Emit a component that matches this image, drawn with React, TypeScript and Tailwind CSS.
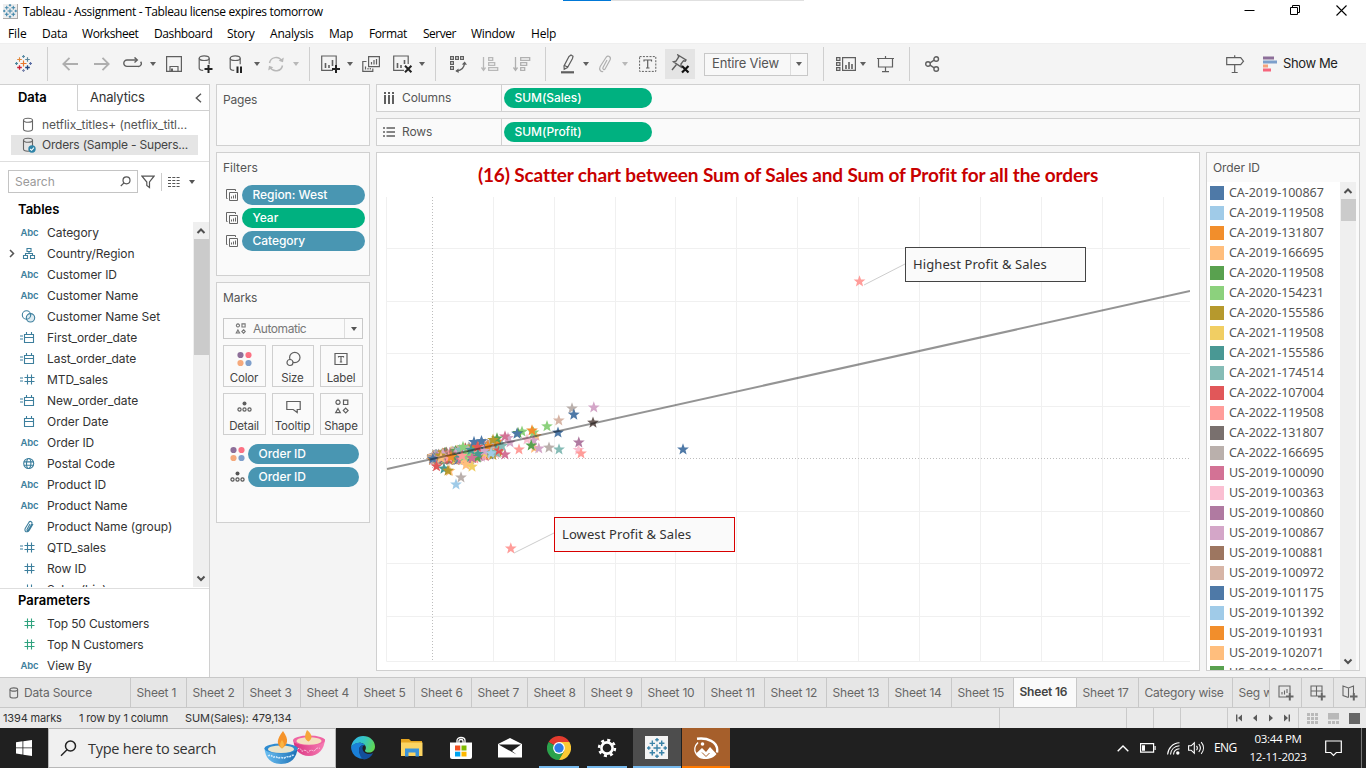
import React from "react";

const UI = "font-['Inter','Liberation_Sans',sans-serif]";
const WIN = "font-['Open_Sans','Noto_Sans',sans-serif]";

type IconProps = { w: number; h: number; c?: string; children: React.ReactNode; sw?: number };

function Icon({ w, h, c = "", sw = 1.2, children }: IconProps) {
  return (
    <svg
      width={w}
      height={h}
      viewBox={`0 0 ${w} ${h}`}
      fill="none"
      stroke="currentColor"
      strokeWidth={sw}
      className={`shrink-0 ${c}`}
    >
      {children}
    </svg>
  );
}

function Caret({ c = "" }: { c?: string }) {
  return (
    <Icon w={6} h={4} c={c}>
      <path d="M0 0h6L3 4z" fill="currentColor" stroke="none" />
    </Icon>
  );
}

function plus(x: number, y: number, r: number) {
  return `M${x - r} ${y}h${2 * r}M${x} ${y - r}v${2 * r}`;
}

function TableauLogo({ mono = false, size = 17, c = "" }: { mono?: boolean; size?: number; c?: string }) {
  const k = (s: string) => (mono ? "#3b83a8" : s);
  return (
    <svg width={size} height={size} viewBox="0 0 17 17" fill="none" className={`shrink-0 ${c}`}>
      <path d={plus(8.5, 8.5, 3)} stroke={k("#e8762c")} strokeWidth="1.200" />
      <path d={plus(4.5, 4.5, 2.3)} stroke={k("#e0873a")} strokeWidth="1.100" />
      <path d={plus(12.5, 4.5, 2.3)} stroke={k("#5b879b")} strokeWidth="1.200" />
      <path d={plus(4.5, 12.5, 2.3)} stroke={k("#c72035")} strokeWidth="1.300" />
      <path d={plus(12.5, 12.5, 2.3)} stroke={k("#1f447e")} strokeWidth="1.300" />
      <path d={plus(8.5, 1.5, 1.5)} stroke={k("#5d8da6")} strokeWidth="1.200" />
      <path d={plus(8.5, 15.5, 1.5)} stroke={k("#7f8ab0")} strokeWidth="1.200" />
      <path d={plus(1.5, 8.5, 1.5)} stroke={k("#4a869b")} strokeWidth="1.200" />
      <path d={plus(15.5, 8.5, 1.5)} stroke={k("#5c6fa6")} strokeWidth="1.200" />
    </svg>
  );
}

function TitleBar() {
  return (
    <div className={`flex h-[23px] items-center bg-white text-[12px] text-black ${WIN}`}>
      <div className="ml-[3px] flex h-[15px] w-[15px] items-center justify-center border-r border-b border-[#aaa] bg-[#eee]">
        <TableauLogo mono size={14} />
      </div>
      <span className="ml-[5px] w-[300px] tracking-[-0.35px] whitespace-nowrap">
        Tableau - Assignment - Tableau license expires tomorrow
      </span>
      <div className="ml-[240px] flex h-px w-[241px] self-start bg-[#e0e0e0]">
        <div className="h-px w-12 bg-[#0078d7]" />
      </div>
      <div className="mr-[19px] mb-[2px] ml-auto flex gap-x-[35px]">
        <Icon w={11} h={11} sw={1}>
          <path d="M.5 5.500h10" />
        </Icon>
        <Icon w={11} h={11} sw={1}>
          <path d="M.5 2.500h7v7h-7zM2.500 2.500v-2h7v7h-2" />
        </Icon>
        <Icon w={11} h={11} sw={1.1}>
          <path d="M.5.500l10 10M10.500.500l-10 10" />
        </Icon>
      </div>
    </div>
  );
}

function MenuBar() {
  return (
    <div className={`flex h-5 items-center bg-white pt-px pl-2 text-[12px] text-black ${WIN}`}>
      <span className="w-[34px] tracking-[-0.1px]">File</span>
      <span className="w-[40px] tracking-[-0.2px]">Data</span>
      <span className="w-[72px] tracking-[-0.45px]">Worksheet</span>
      <span className="w-[73px] tracking-[-0.4px]">Dashboard</span>
      <span className="w-[43px] tracking-[-0.3px]">Story</span>
      <span className="w-[59px] tracking-[-0.2px]">Analysis</span>
      <span className="w-[40px] tracking-[-0.2px]">Map</span>
      <span className="w-[54px] tracking-[-0.4px]">Format</span>
      <span className="w-[48px] tracking-[-0.5px]">Server</span>
      <span className="w-[60px] tracking-[-0.3px]">Window</span>
      <span className="tracking-[-0.2px]">Help</span>
    </div>
  );
}

function Sep({ c }: { c: string }) {
  return <div className={`h-[34px] w-px shrink-0 bg-[#cfcfcf] ${c}`} />;
}

function Toolbar() {
  return (
    <div className={`flex h-[41px] items-center border-t border-[#efefef] bg-[#f4f4f4] text-[#5f5f5f] ${UI}`}>
      <TableauLogo c="mr-px mb-px ml-[15px]" />
      <Sep c="ml-[14px]" />
      <Icon w={16} h={14} c="ml-[14px] text-[#aeaeae]" sw={1.8}>
        <path d="M1 7h15M7.500.8L1.300 7l6.200 6.200" />
      </Icon>
      <Icon w={16} h={14} c="ml-[16px] text-[#aeaeae]" sw={1.8}>
        <path d="M0 7h15M8.500.8L14.700 7l-6.200 6.200" />
      </Icon>
      <Icon w={19} h={12} c="mb-[2px] ml-[13px]" sw={1.4}>
        <path d="M14 3H4a3.200 3.200 0 0 0 0 6.400h11a2.800 2.800 0 0 0 2.600-4.600" />
        <path d="M11.500.4l2.800 2.600-2.800 2.600" />
      </Icon>
      <Caret c="ml-[8px]" />
      <Icon w={16} h={16} c="ml-[10px]">
        <path d="M.6.6h14.800v14.800H.6zM4 15V10.500h8V15" />
        <path d="M6 12.500V15" strokeWidth="2" />
      </Icon>
      <Icon w={16} h={19} c="ml-[16px]">
        <ellipse cx="6.200" cy="3.200" rx="5" ry="2.300" />
        <path d="M1.200 3.200v10c0 1.300 1.800 2 4 2.200M11.200 3.200v6" />
        <path d="M6.500 14h8M10.500 10v8" stroke="#222" strokeWidth="2" />
      </Icon>
      <Icon w={16} h={19} c="ml-[14px]">
        <ellipse cx="7.200" cy="3.200" rx="5" ry="2.300" />
        <path d="M2.200 3.200v10c0 1.300 1.800 2 4 2.200M12.200 3.200v6" />
        <path d="M9.500 11.500v6.500M13 11.500v6.500" stroke="#222" strokeWidth="2" />
      </Icon>
      <Caret c="ml-[10px]" />
      <Icon w={18} h={16} c="ml-[7px] text-[#b8b8b8]" sw={1.5}>
        <path d="M2.500 7a6.600 6.600 0 0 1 12.300-2M15.500 9.500A6.600 6.600 0 0 1 3.300 11.500" />
        <path d="M16.800 1.500l-.8 4.800-4.300-1.500zM1.200 14.500l.8-4.800 4.300 1.500z" fill="currentColor" stroke="none" />
      </Icon>
      <Caret c="ml-[8px] text-[#b8b8b8]" />
      <Sep c="ml-[10px]" />
      <Icon w={20} h={18} c="ml-[11px]">
        <path d="M15.200 11V1H.7v14.400H12" />
        <path d="M4.500 8v5M8 10v3M11.500 5v6" strokeWidth="1.600" />
        <path d="M11 14h8M15 10v8" stroke="#222" strokeWidth="2" />
      </Icon>
      <Caret c="ml-[6px]" />
      <Icon w={18} h={16} c="ml-[9px]">
        <path d="M6.600.6h10.800v10H6.600zM4.500 5.500H.8v9.900h10V12.500" />
        <path d="M9.500 6v2.500M12 4v4.500M14.500 3v5.500M3.500 10.500v3M6 12v1.500M8.300 12v1.500" />
      </Icon>
      <Icon w={20} h={18} c="ml-[13px]">
        <path d="M15.200 9V1H.7v14.400H11" />
        <path d="M4.500 8v5M8 10v3M11.500 5v4" strokeWidth="1.600" />
        <path d="M12 10.800l6.400 6.400M18.400 10.800L12 17.200" stroke="#222" strokeWidth="2" />
      </Icon>
      <Caret c="ml-[6px]" />
      <Sep c="ml-[10px]" />
      <Icon w={18} h={18} c="ml-[13px]">
        <path d="M1.600 1.600h2.800v2.800H1.600zM6.600 1.600h2.800v2.800H6.600zM11.600 1.600h2.800v2.800h-2.800zM1.600 6.600h2.800v2.800H1.600zM1.600 11.600h2.800v2.800H1.600z" />
        <path d="M15.500 8c-.2 4.500-3.500 7.500-8 8" strokeWidth="1.400" />
        <path d="M12.800 9.500l2.900-3 2.300 3.200zM9.500 13.500L6.300 16l3.400 2z" fill="currentColor" stroke="none" />
      </Icon>
      <Icon w={18} h={16} c="ml-[14px] text-[#b8b8b8]" sw={1.3}>
        <path d="M2.500 1v13M.5 11.500l2 2.800 2-2.800M7.700 1.700h4v2.600h-4zM7.700 6.700h6v2.600h-6zM7.700 11.700h9v2.600h-9z" />
      </Icon>
      <Icon w={18} h={16} c="ml-[14px] text-[#b0b0b0]" sw={1.3}>
        <path d="M2.500 1v13M.5 11.500l2 2.800 2-2.800M7.700 1.700h9v2.600h-9zM7.700 6.700h6v2.600h-6zM7.700 11.700h4v2.600h-4z" />
      </Icon>
      <Sep c="ml-[14px]" />
      <Icon w={14} h={20} c="ml-[15px]">
        <path d="M8 2.500L10 1l2 1.300-.5 2.200-5 9-3.300 1.800-.2-3.300zM3.500 11.500l3.500 1.800" />
        <path d="M0 18.300h13" strokeWidth="2.200" />
      </Icon>
      <Caret c="ml-[8px]" />
      <Icon w={14} h={18} c="ml-[9px] text-[#b0b0b0]">
        <path d="M9 5L5 12.500c-.8 1.800 1.300 2.800 2.200 1.200L12 5c1.500-3-2-5.500-4-2.500L2.200 11.500c-1.500 3 .5 5.500 3 5" />
      </Icon>
      <Caret c="ml-[10px] text-[#b8b8b8]" />
      <Icon w={18} h={16} c="ml-[11px]">
        <path d="M.6.6h16.200v14.800H.6z" strokeDasharray="2 1.300" strokeWidth="1" />
        <path d="M5 5.500V4h7.500v1.500M8.700 4v8M7 12h3.500" />
      </Icon>
      <div className="ml-[8px] flex h-[30px] w-[30px] items-center justify-center bg-[#e4e4e4]">
        <Icon w={20} h={20}>
          <path d="M8 1l8 5-.8 1.100-1.700-.4-2.500 3.300.2 3-7.700-5.200 2.500-.7L8.700 3zM6.300 10.800L2 16" strokeWidth="1.400" />
          <path d="M12 12l6.500 6.500M18.500 12L12 18.500" stroke="#111" strokeWidth="2.200" />
        </Icon>
      </div>
      <div className="ml-[9px] flex h-[23px] w-[104px] items-center border border-[#c8c8c8] bg-[#f8f8f8]">
        <span className="w-[85px] pl-[7px] text-[13px] tracking-[-0.18px] text-[#555]">Entire View</span>
        <div className="flex h-full w-[17px] items-center justify-center border-l border-[#ddd]">
          <Caret />
        </div>
      </div>
      <Sep c="ml-[15px]" />
      <Icon w={20} h={16} c="ml-[12px]">
        <path d="M.6 1.600h3.300v2.800H.6zM.6 6.600h3.300v2.800H.6zM.6 11.600h3.300v2.800H.6zM6.600 1.600h12.800v12.800H6.600z" />
        <path d="M10 9v4M13 6v7M16 8v5" strokeWidth="1.600" />
      </Icon>
      <Caret c="ml-[4px]" />
      <Icon w={18} h={17} c="ml-[11px]">
        <path d="M0 2.500h17M1.500 2.500v8.500h14V2.500M8.500 11V15.500M5 15.700h7M8.500 0v2" />
      </Icon>
      <Sep c="ml-[14px]" />
      <Icon w={16} h={16} c="ml-[15px]" sw={1.4}>
        <circle cx="3" cy="8" r="2.300" />
        <circle cx="11.200" cy="3" r="2.300" />
        <circle cx="11.200" cy="13" r="2.300" />
        <path d="M5 6.800l4.200-2.600M5 9.200l4.200 2.600" />
      </Icon>
      <Icon w={19} h={19} c="ml-[285px]">
        <path d="M.7 2.700h14l2.800 3.500-2.800 3.500h-14zM8.700.2v2.500M8.700 9.700v7.500M5.700 17.500h6" />
      </Icon>
      <Icon w={14} h={16} c="ml-[18px]">
        <g stroke="none">
          <path d="M0 .5h11v3H0z" fill="#8d6f99" />
          <path d="M0 4.500h14v3H0z" fill="#7c9fcb" />
          <path d="M0 8.500h5v3H0z" fill="#f5a37c" />
          <path d="M0 12.500h8v3H0z" fill="#f7657c" />
        </g>
      </Icon>
      <span className="ml-[6px] text-[13px] tracking-[-0.4px] text-[#222]">Show Me</span>
    </div>
  );
}

const abc = (
  <span className="w-4 pt-px text-center text-[9.5px] font-semibold tracking-[-0.2px] text-[#3d7f9d]">Abc</span>
);

function FieldIcon({ kind }: { kind: string }) {
  const calc = kind.startsWith("=");
  const k = kind.replace("=", "");
  const body: Record<string, React.ReactNode> = {
    date: <path d="M6.500 3.500h9v8h-9zM6.500 6.500h9M8.500 1v2.500M13.500 1v2.500" />,
    num: <path d="M9.500 1.500v10M13.500 1.500v10M6.500 4.500h10M6.500 8.500h10" />,
    geo: (
      <>
        <circle cx="10.700" cy="6.500" r="5" />
        <ellipse cx="10.700" cy="6.500" rx="2.200" ry="5" />
        <path d="M5.900 4.900h9.600M5.900 8.200h9.600" />
      </>
    ),
    set: (
      <>
        <circle cx="8.500" cy="5" r="4.200" />
        <circle cx="12.500" cy="7.800" r="4.200" fill="#4996b230" />
      </>
    ),
    hier: <path d="M9 1.500h4v3H9zM11 4.500v2M7.500 8.500v-2h7v2M5.500 8.500h4v3h-4zM12.500 8.500h4v3h-4z" />,
    group: (
      <path d="M12 4L9 9.500c-.4 1 .6 1.500 1.200.7L13.800 4c1-2-1.500-3.500-2.800-1.800L7.200 8.500c-1 2.200.6 3.600 2.200 3.200 1.200-.2 1.700-1.200 2.200-2L15 4" />
    ),
  };
  if (k === "abc") return <div className="flex w-[17px] justify-center">{abc}</div>;
  return (
    <Icon w={17} h={13} sw={1.1} c="text-[#3d7f9d]">
      {calc && <path d="M0 5h3M0 8h3" />}
      <g transform="translate(-2 0)">{body[k]}</g>
    </Icon>
  );
}

const FIELDS: [string, string][] = [
  ["abc", "Category"],
  ["hier", "Country/Region"],
  ["abc", "Customer ID"],
  ["abc", "Customer Name"],
  ["set", "Customer Name Set"],
  ["=date", "First_order_date"],
  ["=date", "Last_order_date"],
  ["=num", "MTD_sales"],
  ["=date", "New_order_date"],
  ["date", "Order Date"],
  ["abc", "Order ID"],
  ["geo", "Postal Code"],
  ["abc", "Product ID"],
  ["abc", "Product Name"],
  ["group", "Product Name (group)"],
  ["=num", "QTD_sales"],
  ["num", "Row ID"],
  ["num", "Sales (bin)"],
];

function ScrollBar({ thumb }: { thumb: string }) {
  return (
    <div className="flex w-4 shrink-0 flex-col items-center bg-[#efefef] text-[#505050]">
      <Icon w={10} h={17} sw={2}>
        <path d="M1.500 11L5 7.500 8.500 11" />
      </Icon>
      <div className={`w-[15px] bg-[#cbcbcb] ${thumb}`} />
      <Icon w={10} h={17} sw={2} c="mt-auto">
        <path d="M1.500 6.500L5 10l3.500-3.500" />
      </Icon>
    </div>
  );
}

function Cylinder({ checked = false }: { checked?: boolean }) {
  return (
    <Icon w={14} h={16} c="text-[#666]" sw={1.1}>
      <ellipse cx="6" cy="3.300" rx="4.500" ry="2" />
      <path d="M1.500 3.300v8.800c0 2.800 9 2.800 9 0V3.300" />
      {checked && (
        <>
          <circle cx="10" cy="12" r="3.700" fill="#2f84a8" stroke="none" />
          <path d="M8.200 12l1.400 1.300 2.300-2.600" stroke="#fff" />
        </>
      )}
    </Icon>
  );
}

function DataPane() {
  return (
    <div className="flex w-[210px] shrink-0 flex-col border-t border-r border-[#d0d0d0] bg-white">
      <div className="flex h-[26px] shrink-0 text-[13px]">
        <div className="flex w-[77px] items-center pl-[18px] font-semibold tracking-[-0.1px] text-black">Data</div>
        <div className="flex flex-1 items-center border-b border-l border-[#d0d0d0] pl-[12px] tracking-[-0.2px] text-[#333]">
          <span>Analytics</span>
          <Icon w={7} h={10} c="mr-[7px] ml-auto text-[#555]" sw={1.4}>
            <path d="M6 .8L1.300 5 6 9.200" />
          </Icon>
        </div>
      </div>
      <div className="mt-1 flex h-5 shrink-0 items-center pl-[22px] text-[12px] tracking-[-0.05px] text-[#555]">
        <Cylinder />
        <span className="ml-[6px]">netflix_titles+ (netflix_titl...</span>
      </div>
      <div className="mr-[11px] ml-[11px] flex h-5 shrink-0 items-center bg-[#e5e5e5] pl-[11px] text-[12px] tracking-[-0.2px] whitespace-nowrap text-[#444]">
        <Cylinder checked />
        <span className="ml-[6px]">Orders (Sample - Supers...</span>
      </div>
      <div className="mt-[6px] h-px shrink-0 bg-[#dedede]" />
      <div className="mt-[8px] flex h-[23px] shrink-0 items-center pl-2 text-[#555]">
        <div className="flex h-[23px] w-[130px] items-center border border-[#c4c4c4] pl-[6px] text-[12px] text-[#9a9a9a]">
          Search
          <Icon w={11} h={11} c="mr-[6px] ml-auto text-[#555]">
            <circle cx="6.500" cy="4.300" r="3.500" />
            <path d="M4 6.800L.8 10" />
          </Icon>
        </div>
        <Icon w={14} h={14} c="ml-[3px]">
          <path d="M1 1.200h12L8.500 7v5.500L5.800 10.500V7z" />
        </Icon>
        <div className="ml-[6px] h-[18px] w-px bg-[#ccc]" />
        <Icon w={12} h={10} c="ml-[6px]">
          <path d="M0 .5h12M0 3.500h12M0 6.500h12M0 9.500h12" strokeDasharray="3 1.300" />
        </Icon>
        <Caret c="ml-[9px]" />
      </div>
      <div className="mt-[9px] shrink-0 pl-[18px] text-[13px] leading-[14px] font-semibold text-black">Tables</div>
      <div className="mt-[6px] flex h-[365px] shrink-0 overflow-hidden">
        <div className="flex-1 text-[12px] text-[#333]">
          {FIELDS.map(([kind, name]) => (
            <div key={name} className="flex h-[21px] items-center pl-[9px] whitespace-nowrap">
              <div className="flex w-[11px] text-[#555]">
                {kind === "hier" && (
                  <Icon w={6} h={9} sw={1.5}>
                    <path d="M1 1l3.500 3.500L1 8" />
                  </Icon>
                )}
              </div>
              <FieldIcon kind={kind} />
              <span className="ml-[10px] tracking-[-0.05px]">{name}</span>
            </div>
          ))}
        </div>
        <ScrollBar thumb="h-[116px]" />
      </div>
      <div className="mt-px h-px shrink-0 bg-[#dedede]" />
      <div className="mt-[4px] shrink-0 pl-[18px] text-[13px] leading-[14px] font-semibold text-black">Parameters</div>
      <div className="mt-[6px] text-[12px] text-[#333]">
        {["Top 50 Customers", "Top N Customers", "View By"].map((p, i) => (
          <div key={p} className="flex h-[21px] items-center pl-5">
            {i < 2 ? (
              <Icon w={17} h={13} sw={1.1} c="text-[#2fa27e]">
                <path d="M7.500 1.500v10M11.500 1.500v10M4.500 4.500h10M4.500 8.500h10" />
              </Icon>
            ) : (
              <FieldIcon kind="abc" />
            )}
            <span className="ml-[10px] tracking-[-0.15px]">{p}</span>
          </div>
        ))}
      </div>
    </div>
  );
}

function Pill({ text, green = false, w }: { text: string; green?: boolean; w: string }) {
  return (
    <div
      className={`flex h-5 shrink-0 items-center rounded-full pl-[10.5px] text-[12px] font-medium tracking-[-0.05px] text-white ${green ? "bg-[#00b180]" : "bg-[#4996b2]"} ${w}`}
    >
      {text}
    </div>
  );
}

const shapes = (
  <path d="M4 1.200a2.100 2.100 0 1 0 .01 0zM9.500 1.200h4.300v4.300H9.500zM4 9.500l2.300 4.200H1.700zM11.700 9.200l2.400 2.400-2.400 2.400-2.400-2.400z" />
);

const colorDots = (
  <g stroke="none">
    <circle cx="3.500" cy="4" r="3.100" fill="#8d6f99" />
    <circle cx="11.500" cy="4" r="3.100" fill="#fc7183" />
    <circle cx="3.500" cy="12" r="3.100" fill="#f5a97c" />
    <circle cx="11.500" cy="12" r="3.100" fill="#7f9fcb" />
  </g>
);

const detailDots = (
  <>
    <circle cx="7.500" cy="4.500" r="2" fill="currentColor" stroke="none" />
    <circle cx="2.500" cy="10.500" r="1.600" />
    <circle cx="7.500" cy="10.500" r="1.600" />
    <circle cx="12.500" cy="10.500" r="1.600" />
  </>
);

function MarkButton({ label, children }: { label: string; children: React.ReactNode }) {
  return (
    <div className="flex h-[42px] flex-col items-center border border-[#cfcfcf] pt-[5px] text-[11.5px] leading-[14px] tracking-[-0.2px] text-[#444]">
      <Icon w={15} h={16} c="text-[#5f5f5f]">
        {children}
      </Icon>
      <span className="mt-[4px] mr-px">{label}</span>
    </div>
  );
}

function FilterRow({ text, green = false }: { text: string; green?: boolean }) {
  return (
    <div className="mb-[3px] flex h-5 items-center pl-[9px] text-[#666]">
      <Icon w={12} h={12} sw={1}>
        <path d="M3.500 3.500h8v8h-8zM1.500 9.500h-1v-9h9v1.500M5.500 7.500v2M7.500 6.500v3M9.500 5.500v4" />
      </Icon>
      <div className="w-[4px]" />
      <Pill text={text} green={green} w="w-[123px]" />
    </div>
  );
}

const card = "border border-[#d0d0d0] bg-[#fafafa] text-[12px] text-[#555]";

function Cards() {
  return (
    <div className="ml-[6px] flex w-[154px] shrink-0 flex-col gap-[6px]">
      <div className={`h-[62px] shrink-0 pt-[6px] pl-[6px] tracking-[-0.2px] ${card}`}>Pages</div>
      <div className={`h-[124px] shrink-0 ${card}`}>
        <div className="h-[32px] pt-[6px] pl-[6px]">Filters</div>
        <FilterRow text="Region: West" />
        <FilterRow text="Year" green />
        <FilterRow text="Category" />
      </div>
      <div className={`h-[241px] shrink-0 ${card}`}>
        <div className="h-[35px] pt-[6px] pl-[6px] tracking-[-0.2px]">Marks</div>
        <div className="ml-[6px] flex h-[21px] w-[140px] items-center border border-[#c8c8c8] text-[#777]">
          <svg width="11" height="11" viewBox="0 0 15 15" fill="none" stroke="currentColor" strokeWidth="1.5" className="ml-[11px]">
            {shapes}
          </svg>
          <span className="ml-[7px] tracking-[-0.45px]">Automatic</span>
          <div className="ml-auto flex h-full w-[18px] items-center justify-center border-l border-[#ddd] text-[#555]">
            <Caret />
          </div>
        </div>
        <div className="mt-[6px] ml-[6px] grid w-[140px] grid-cols-[43px_42px_43px] gap-x-[6px] gap-y-[6px]">
          <MarkButton label="Color">{colorDots}</MarkButton>
          <MarkButton label="Size">
            <circle cx="8.800" cy="6.500" r="5.200" />
            <circle cx="4" cy="11.500" r="3" fill="#fafafa" />
          </MarkButton>
          <MarkButton label="Label">
            <path d="M1 2.500h12v11H1zM4.500 6.500V5.500h5v1M7 5.500v5.500M5.800 11h2.400" />
          </MarkButton>
          <MarkButton label="Detail">{detailDots}</MarkButton>
          <MarkButton label="Tooltip">
            <path d="M.8 2.500h13.400v8h-3v3l-4-3H.8z" />
          </MarkButton>
          <MarkButton label="Shape">{shapes}</MarkButton>
        </div>
        <div className="mt-[9px] ml-[13px] flex h-5 items-center">
          <Icon w={15} h={16}>{colorDots}</Icon>
          <div className="w-[3px]" />
          <Pill text="Order ID" w="w-[111px]" />
        </div>
        <div className="mt-[3px] ml-[13px] flex h-5 items-center">
          <Icon w={15} h={16}>{detailDots}</Icon>
          <div className="w-[3px]" />
          <Pill text="Order ID" w="w-[111px]" />
        </div>
      </div>
    </div>
  );
}

const PALETTE = [
  "#4e79a7", "#a0cbe8", "#f28e2b", "#ffbe7d", "#59a14f", "#8cd17d", "#b6992d", "#f1ce63", "#499894", "#86bcb6",
  "#e15759", "#ff9d9a", "#79706e", "#bab0ac", "#d37295", "#fabfd2", "#b07aa1", "#d4a6c8", "#9d7660", "#d7b5a6",
];

const LEGEND = [
  "CA-2019-100867", "CA-2019-119508", "CA-2019-131807", "CA-2019-166695", "CA-2020-119508", "CA-2020-154231",
  "CA-2020-155586", "CA-2021-119508", "CA-2021-155586", "CA-2021-174514", "CA-2022-107004", "CA-2022-119508",
  "CA-2022-131807", "CA-2022-166695", "US-2019-100090", "US-2019-100363", "US-2019-100860", "US-2019-100867",
  "US-2019-100881", "US-2019-100972", "US-2019-101175", "US-2019-101392", "US-2019-101931", "US-2019-102071",
  "US-2019-102085",
];

const STAR_POINTS = [
  [683, 449.5, 0], [859.5, 281.5, 11], [510.8, 548.5, 11],
  [572, 408.5, 13], [593.8, 407.5, 17], [573.8, 414.7, 0], [558.8, 420.5, 19], [547, 426.3, 5],
  [558, 432.6, 0], [578.5, 450, 15], [578.8, 442.5, 16], [581, 453.5, 11], [559, 449.5, 9],
  [549, 447.7, 13], [534.5, 448, 3], [538.8, 448.5, 17], [536, 436, 3], [533.5, 440.5, 17], [527, 439.5, 15],
  [533.5, 432.5, 5], [532, 430.5, 2], [531.2, 445.5, 4], [519, 449.5, 11], [522, 431.6, 5], [518, 433, 4], [517, 433.7, 0],
  [508, 438, 17], [505, 436.5, 14], [510, 442.5, 17], [505, 454.5, 14], [499, 450.5, 10], [502, 446, 9], [491, 453.3, 1],
  [497, 438.5, 4], [493, 440, 6], [481.5, 441.2, 0], [474, 442, 0], [477.5, 447, 10],
  [466, 465, 3], [472, 466.7, 7], [436.5, 466.3, 10], [444, 468.7, 8], [449.5, 471, 3], [448, 470.7, 6],
  [461, 477.5, 13], [456, 484.5, 1],
];

function makeCluster() {
  let seed = 20231112;
  const rnd = () => {
    seed = (seed * 1664525 + 1013904223) % 4294967296;
    return seed / 4294967296;
  };
  const out: number[][] = [];
  for (let i = 0; i < 560; i++) {
    const t = Math.pow(rnd(), 1.5);
    const x = 432.5 + t * 66;
    const hi = 456 - t * 16;
    const lo = 460 - Math.max(0, t - 0.55) * 14;
    out.push([x, hi + rnd() * (lo - hi), Math.floor(rnd() * 20)]);
  }
  return out;
}

const CORE = [
  [488, 446, 2], [484, 451, 17], [478, 454, 8], [470, 454, 5], [463, 447, 5], [451, 457, 2], [462, 456, 11],
  [472, 458, 14], [471, 450, 8], [441, 458, 3], [432.8, 458.6, 0],
];

function starPath(x: number, y: number) {
  let d = "";
  for (let i = 0; i < 10; i++) {
    const r = i % 2 ? 2.6 : 6.2;
    const a = -Math.PI / 2 + (i * Math.PI) / 5;
    d += `${i ? "L" : "M"}${(x + r * Math.cos(a)).toFixed(1)} ${(y + r * Math.sin(a)).toFixed(1)}`;
  }
  return d + "z";
}

function Callout({ text, c }: { text: string; c: string }) {
  return (
    <div
      className={`absolute flex h-[35px] w-[181px] items-center border bg-[#fafafaf0] pl-[7px] font-['Noto_Sans',sans-serif] text-[13px] tracking-[0.1px] text-[#333] ${c}`}
    >
      {text}
    </div>
  );
}

function Scatter() {
  const vx = [493.5, 554.5, 615.5, 675.5, 736.5, 797.5, 858.5, 919.5, 980.5, 1041.5, 1102.5, 1163.5];
  const hy = [248.5, 301.5, 353.5, 406.5, 511.5, 563.5, 616.5];
  return (
    <div className="relative ml-[9px] h-[465px] w-[804px]">
      <svg width="804" height="465" viewBox="386 197 804 465" fill="none">
        <g stroke="#f0f0f0">
          <path d="M386.5 197v464.500h803.500" />
          {vx.map((x) => (
            <path key={x} d={`M${x} 197V662`} />
          ))}
          {hy.map((y) => (
            <path key={y} d={`M387 ${y}H1190`} />
          ))}
        </g>
        <path d="M432.500 197V662M387 458.500H1190" stroke="#bdbdbd" strokeDasharray="1 2" />
        {makeCluster().concat(CORE, STAR_POINTS).map(([x, y, k], i) => (
          <path key={i} d={starPath(x, y)} fill={PALETTE[k]} />
        ))}
        <path d={starPath(593, 422.7)} fill="#6b5d5a" />
        <path d="M387 469L1190 291" stroke="#000" strokeOpacity=".42" strokeWidth="2" />
        <path d="M905 264L864 285M554 533L514 553" stroke="#cdcdcd" />
      </svg>
      <Callout text="Highest Profit & Sales" c="top-[50px] left-[519px] border-[#444]" />
      <Callout text="Lowest Profit & Sales" c="top-[320px] left-[168px] border-[#d80000]" />
    </div>
  );
}

function Shelf({ label, value, rows = false }: { label: string; value: string; rows?: boolean }) {
  return (
    <div className={`flex h-[28px] shrink-0 items-center ${card}`}>
      <Icon w={13} h={12} c="ml-[6px] text-[#5f5f5f]" sw={2}>
        {rows ? (
          <path d="M0 2h2M0 6h2M0 10h2M3.500 2H12M3.500 6H12M3.500 10H12" strokeWidth="1.600" />
        ) : (
          <path d="M2 0v2M6 0v2M10 0v2M2 3v9M6 3v9M10 3v9" />
        )}
      </Icon>
      <span className="ml-[6px] w-[99px] tracking-[-0.1px]">{label}</span>
      <div className="mr-[2px] h-full w-px bg-[#d0d0d0]" />
      <Pill text={value} green w="w-[148px]" />
    </div>
  );
}

function Main() {
  return (
    <div className="ml-[6px] flex w-[984px] shrink-0 flex-col gap-[6px]">
      <Shelf label="Columns" value="SUM(Sales)" />
      <Shelf label="Rows" value="SUM(Profit)" rows />
      <div className="flex h-[519px] shrink-0 gap-[6px]">
        <div className="w-[824px] shrink-0 border border-[#d0d0d0] bg-white">
          <div className="flex h-[44px] items-center justify-center pt-px font-['Lato',sans-serif] text-[19px] font-bold tracking-[-0.13px] text-[#c80000]">
            (16) Scatter chart between Sum of Sales and Sum of Profit for all the orders
          </div>
          <Scatter />
        </div>
        <div className="flex w-[154px] flex-col overflow-hidden border border-[#d0d0d0] bg-[#fafafa]">
          <div className="h-[29px] shrink-0 pt-[6px] pl-[6px] text-[12px] tracking-[-0.1px] text-[#555]">Order ID</div>
          <div className="mr-[3px] flex h-[488px] overflow-hidden bg-white">
            <div className="flex-1 pt-px font-['Noto_Sans',sans-serif] text-[12.5px] tracking-[-0.05px] text-[#555]">
              {LEGEND.map((l, i) => (
                <div key={l} className="flex h-5 items-center pl-[3px]">
                  <div className="mb-px h-[14px] w-[14px]" style={{ background: PALETTE[i % 20] }} />
                  <span className="ml-[5px]">{l}</span>
                </div>
              ))}
            </div>
            <ScrollBar thumb="h-[22px]" />
          </div>
        </div>
      </div>
    </div>
  );
}

const TABS: [string, string][] = [
  ["Sheet 1", "w-[56px]"], ["Sheet 2", "w-[57px]"], ["Sheet 3", "w-[57px]"], ["Sheet 4", "w-[57px]"],
  ["Sheet 5", "w-[57px]"], ["Sheet 6", "w-[57px]"], ["Sheet 7", "w-[56px]"], ["Sheet 8", "w-[57px]"],
  ["Sheet 9", "w-[57px]"], ["Sheet 10", "w-[63px]"], ["Sheet 11", "w-[60px]"], ["Sheet 12", "w-[62px]"],
  ["Sheet 13", "w-[62px]"], ["Sheet 14", "w-[63px]"], ["Sheet 15", "w-[62px]"], ["Sheet 16", "w-[63px]"],
  ["Sheet 17", "w-[62px]"], ["Category wise", "w-[94px]"], ["Seg w", "w-[37px]"],
];

function SheetTabs() {
  return (
    <div className="flex h-[31px] shrink-0 border-t border-b border-[#c8c8c8] bg-[#e6e6e6] text-[12px] text-[#666]">
      <div className="flex w-[131px] shrink-0 items-center border-r border-[#c8c8c8] pl-[9px]">
        <Icon w={10} h={12} sw={1.1}>
          <ellipse cx="4.800" cy="2.500" rx="3.800" ry="1.600" />
          <path d="M1 2.500v7c0 2 7.600 2 7.600 0v-7" />
        </Icon>
        <span className="ml-[5px] tracking-[-0.15px]">Data Source</span>
      </div>
      {TABS.map(([t, w]) => (
        <div
          key={t}
          className={`flex shrink-0 items-center overflow-hidden border-r border-[#c8c8c8] pl-[5.5px] tracking-[-0.2px] whitespace-nowrap ${w} ${t === "Sheet 16" ? "bg-[#fafafa] pb-[2px] font-semibold text-[#444]" : ""}`}
        >
          {t}
        </div>
      ))}
      {[
        "M12 8V1H1v11h7M4 7v2.500M6.500 5.500v4M9 4v4",
        "M12 8V1H1v10h7M1 6h11M6.500 1v10",
        "M11.500 8V1L6.500 3 1 1v9.500l5.500 2M6.500 3v9.500",
      ].map((d) => (
        <div key={d} className="flex w-[32px] shrink-0 items-center justify-center border-r border-[#c8c8c8]">
          <Icon w={16} h={16} sw={1.1}>
            <path d={d} />
            <path d="M8 11.500h7.500M11.800 8v7.500" strokeWidth="2" />
          </Icon>
        </div>
      ))}
    </div>
  );
}

function StatusBar() {
  return (
    <div className="flex h-[20px] shrink-0 items-center bg-[#eaeaea] text-[11px] whitespace-nowrap text-[#333]">
      <span className="w-[76px] pl-[3px] tracking-[-0.15px]">1394 marks</span>
      <span className="w-[106px] pl-[3px] tracking-[-0.15px]">1 row by 1 column</span>
      <span className="pl-[3px] tracking-[-0.07px]">SUM(Sales): 479,134</span>
      <div className="ml-auto flex h-full shrink-0">
        <div className="w-[127px] border-l border-[#cacaca]" />
        <div className="w-[27px] border-l border-[#cacaca]" />
        <div className="w-[27px] border-l border-[#cacaca]" />
        <div className="w-[47px] border-l border-[#cacaca]" />
        <div className="flex w-[71px] items-center justify-center border-l border-[#cacaca]">
          <Icon w={56} h={8} c="text-[#5a5a5a]">
            <path
              d="M1 .5h1.400v7H1zM7 .5v7L3 4zM22 .5v7L18 4zM34 .5v7L38 4zM49 .5v7L53 4zM53.600.5H55v7h-1.400z"
              fill="currentColor"
              stroke="none"
            />
          </Icon>
        </div>
        <div className="flex w-[68px] items-center border-l border-[#cacaca] pl-[8px]">
          <Icon w={54} h={11}>
            <g stroke="none">
              <path
                d="M0 0h3v3H0zM4 0h3v3H4zM8 0h3v3H8zM0 4h3v3H0zM4 4h3v3H4zM8 4h3v3H8zM0 8h3v3H0zM4 8h3v3H4zM8 8h3v3H8zM21 0h11v6.500H21zM21 8h3v3h-3zM25 8h3v3h-3zM29 8h3v3h-3z"
                fill="#b9b9b9"
              />
              <path d="M42 0h11v11H42z" fill="#666" />
            </g>
          </Icon>
        </div>
      </div>
    </div>
  );
}

function Diyas() {
  return (
    <svg width="62" height="36" viewBox="0 0 62 36" className="shrink-0">
      <defs>
        <linearGradient id="blueBowl" x1="0" x2="1" y1="0" y2="0">
          <stop offset="0" stopColor="#6cc0f2" />
          <stop offset="1" stopColor="#1c6fb4" />
        </linearGradient>
        <linearGradient id="pinkBowl" x1="0" x2="1" y1="0" y2="0">
          <stop offset="0" stopColor="#d8317f" />
          <stop offset="1" stopColor="#f77fb4" />
        </linearGradient>
      </defs>
      <path d="M29.500 10c0 9 6 16 15.500 16S60.500 19 61 9z" fill="url(#pinkBowl)" />
      <ellipse cx="45" cy="10.500" rx="16" ry="5" fill="#f064a4" />
      <ellipse cx="45" cy="11" rx="12.500" ry="3.800" fill="#f3e0c0" />
      <path d="M33 19.500q3-3 5 2 3-3 6 1 3-4 6-1 3-5 6-3" stroke="#fbd0e4" fill="none" strokeDasharray="2 1" />
      <path d="M43 0c6 5 5.500 9 1.500 11.500-4-2-4.500-5-1.500-11.500z" fill="#f6a63a" />
      <path d="M.5 18C1 28 7 34 17 34s16-6 16.500-16.500z" fill="url(#blueBowl)" />
      <ellipse cx="17" cy="18.500" rx="16.500" ry="5" fill="#2f8bd0" />
      <ellipse cx="17" cy="19.300" rx="13" ry="3.800" fill="#e9e4cc" />
      <path d="M4 26q3-2 5 1.500 3-2 5 1 3-2 6 0 3-3 5-1 3-3 5-2" stroke="#cfeafd" fill="none" strokeWidth="1.500" strokeDasharray="2 1" />
      <path d="M19 1c6.500 9 4.500 14-1 17.500-6-4-5.500-9 1-17.500z" fill="#f5932a" />
      <path d="M18 10c3 4 2 7 0 8.500-3-2.500-2-5.500 0-8.500z" fill="#fbb542" />
    </svg>
  );
}

function Slot({ children, line = "" }: { children: React.ReactNode; line?: string }) {
  return (
    <div className="flex w-[48.8px] shrink-0 flex-col items-center">
      <div className="flex h-[38px] items-center pt-[2px]">{children}</div>
      <div className={`h-[2px] w-10 ${line}`} />
    </div>
  );
}

function Taskbar() {
  return (
    <div className={`flex h-[40px] shrink-0 bg-[#202020] text-white ${WIN}`}>
      <div className="flex w-12 items-center justify-center">
        <svg width="16" height="16" viewBox="0 0 16 16" fill="#fff">
          <path d="M0 2.200l6.500-.9v6.200H0zM7.300 1.200L16 0v7.500H7.300zM0 8.300h6.500v6.200L0 13.600zM7.300 8.300H16V16l-8.700-1.300z" />
        </svg>
      </div>
      <div className="flex h-full w-[288px] items-center border border-[#b8b8b8] bg-[#f0f0f0] pl-[11px] text-[#333]">
        <Icon w={17} h={17} sw={1.5} c="text-[#222]">
          <circle cx="10.500" cy="6" r="5" />
          <path d="M7 9.700L1 15.700" />
        </Icon>
        <span className="mt-px ml-[11px] text-[14.5px] tracking-[-0.28px] whitespace-nowrap">Type here to search</span>
        <div className="mr-[9px] ml-auto">
          <Diyas />
        </div>
      </div>
      <div className="w-[3px]" />
      <Slot>
        <svg width="24" height="24" viewBox="0 0 24 24">
          <defs>
            <linearGradient id="edgeTop" x1="0" x2="1" y1="0.300" y2="0.600">
              <stop offset="0" stopColor="#2fb5e8" />
              <stop offset="0.500" stopColor="#36c6c0" />
              <stop offset="1" stopColor="#62d84f" />
            </linearGradient>
          </defs>
          <path d="M0 11.500C1 4.500 6 0 12 0c7 0 12 5 12 10.500 0 4-3 6-6 6-2.500 0-4-.8-4-1.800 0-.8.900-1.200.9-3C14.900 9 12 6.800 8.500 6.800 4.500 6.800 1.500 9 0 11.500z" fill="url(#edgeTop)" />
          <path d="M0 11.500C1.500 8.500 4.500 6.800 8.500 6.800c2.500 0 4.500 1 5.500 2.500-3-.8-6 1.200-6 5 0 5 5 8.200 9.500 7.200A12 12 0 0 1 0 11.500z" fill="#1a80d8" />
          <path d="M8 14c0-3 2-5 5.200-4.900-2 1.400-2.400 4.400-.2 6.800 2.500 2.700 6.500 2.500 9.200 1-2 4-5.700 6.400-9.200 6.700C10 22.500 8 18 8 14z" fill="#134f9c" />
        </svg>
      </Slot>
      <Slot>
        <svg width="22" height="20" viewBox="0 0 22 20">
          <path d="M0 1h8l2 2h11v15H0z" fill="#e6a520" />
          <path d="M0 4.500h21.500v13.500H0z" fill="#fcd462" />
          <path d="M4 10.500h14v8H14.500v-4h-7v4H4z" fill="#3a93da" />
        </svg>
      </Slot>
      <Slot>
        <svg width="22" height="24" viewBox="0 0 22 24">
          <path d="M7 7V4.500C7 .5 15 .5 15 4.500V7M9 7V5c0-2 4-2 4 0v2" fill="none" stroke="#fff" strokeWidth="1.300" />
          <path d="M0 6.500h22V21a2 2 0 0 1-2 2H2a2 2 0 0 1-2-2z" fill="#fff" />
          <path d="M5 9.500h5.300v5H5z" fill="#f25022" />
          <path d="M11.500 9.500h5v5h-5z" fill="#7fba00" />
          <path d="M5 15.700h5.300v4.800H5z" fill="#00a4ef" />
          <path d="M11.500 15.700h5v4.800h-5z" fill="#ffb900" />
        </svg>
      </Slot>
      <Slot>
        <svg width="24" height="20" viewBox="0 0 24 20" fill="#fff">
          <path d="M0 6L12 0l12 6v13.500H0z" />
          <path d="M.5 6.500h22.500l-9 6.500 4.500 3.500z" fill="#202020" />
        </svg>
      </Slot>
      <Slot line="bg-[#76b9ed]">
        <svg width="24" height="24" viewBox="0 0 24 24">
          <path d="M12 12L1.600 6A12 12 0 0 1 22.400 6z" fill="#e33b2e" />
          <path d="M12 12L1.600 6A12 12 0 0 0 12 24l5.200-9z" fill="#2ba24c" />
          <path d="M12 6h10.400A12 12 0 0 1 12 24l5.200-9z" fill="#fcc934" />
          <circle cx="12" cy="12" r="5.900" fill="#fff" />
          <circle cx="12" cy="12" r="4.700" fill="#2f7be8" />
        </svg>
      </Slot>
      <Slot line="bg-[#76b9ed]">
        <svg width="20" height="20" viewBox="0 0 20 20" fill="none" stroke="#fff">
          <circle cx="10" cy="10" r="5.600" strokeWidth="2.600" />
          <circle cx="10" cy="10" r="7.900" strokeWidth="2.600" strokeDasharray="3 3.200" />
        </svg>
      </Slot>
      <div className="ml-[1px] flex w-12 flex-col items-center bg-[#4d4d4d]">
        <div className="mt-[8px] mb-auto flex h-[23px] w-[23px] items-center justify-center bg-[#f4f4f4]">
          <TableauLogo mono size={20} />
        </div>
        <div className="h-[2px] w-full bg-[#76b9ed]" />
      </div>
      <div className="ml-px flex w-12 flex-col items-center bg-[#a65f2b]">
        <svg width="26" height="23" viewBox="0 0 26 23" fill="none" className="mt-[9px] mb-auto">
          <path d="M5 5.500C1.500 9 1 13.500 3 16.500" stroke="#fff" strokeWidth="1.500" />
          <path d="M4 1.800C13 .5 26 4 24 15.500" stroke="#fff" strokeWidth="2.400" />
          <path d="M2.500 17l6.500-6 4 4 4-5 6.500 7C20 22.500 7 25 2.500 17z" fill="#fff" />
          <circle cx="9.500" cy="7" r="1.800" fill="#fff" />
          <path d="M9 15.500l4 4 3.500-3.500" stroke="#a65f2b" />
        </svg>
        <div className="h-[2px] w-full bg-[#ff7a00]" />
      </div>
      <div className="ml-auto flex items-center">
        <Icon w={12} h={7} sw={1.4}>
          <path d="M.7 6.300L6 1l5.300 5.300" />
        </Icon>
        <Icon w={16} h={10} c="ml-[11px]">
          <path d="M.6.600h13v8.600H.6z" />
          <path d="M2 2.200h3v5.500H2zM14.500 3h1.200v4h-1.200z" fill="currentColor" stroke="none" />
        </Icon>
        <Icon w={13} h={13} c="ml-[11px]" sw={1.1}>
          <path d="M.6 12.500C1 6 6 1 12.500.8M3.500 12.500C4 7.500 7.500 4 12.500 3.800M6.500 12.500C6.800 9 9 7 12.500 6.800" />
          <circle cx="10.800" cy="11" r="1.700" fill="currentColor" stroke="none" />
        </Icon>
        <Icon w={17} h={14} c="ml-[8px]" sw={1.1}>
          <path d="M.6 4.800h2.500L6.300 1.800v10.400L3.100 9.200H.6zM8.500 4.800c1 1.300 1 3.100 0 4.400M10.800 3c2 2.500 2 5.500 0 8M13.200 1.200c3 3.500 3 8.100 0 11.600" />
        </Icon>
        <span className="ml-[9px] w-[23px] text-[12px] tracking-[-0.6px]">ENG</span>
        <div className="ml-[12px] flex w-[58px] flex-col items-center text-[11.5px] leading-[18px] tracking-[-0.3px] whitespace-nowrap">
          <span>03:44 PM</span>
          <span>12-11-2023</span>
        </div>
        <Icon w={17} h={17} c="ml-[18px]">
          <path d="M.7 1h15.600v11.500h-5L8.500 15.300 5.700 12.500h-5z" />
        </Icon>
        <div className="mr-[4px] ml-[19px] h-full w-px bg-[#777]" />
      </div>
    </div>
  );
}

export default function App() {
  return (
    <div className={`flex h-[768px] w-[1366px] flex-col overflow-hidden bg-[#f4f4f4] ${UI}`}>
      <TitleBar />
      <MenuBar />
      <Toolbar />
      <div className="flex h-[593px] shrink-0">
        <DataPane />
        <Cards />
        <Main />
      </div>
      <SheetTabs />
      <StatusBar />
      <Taskbar />
    </div>
  );
}
